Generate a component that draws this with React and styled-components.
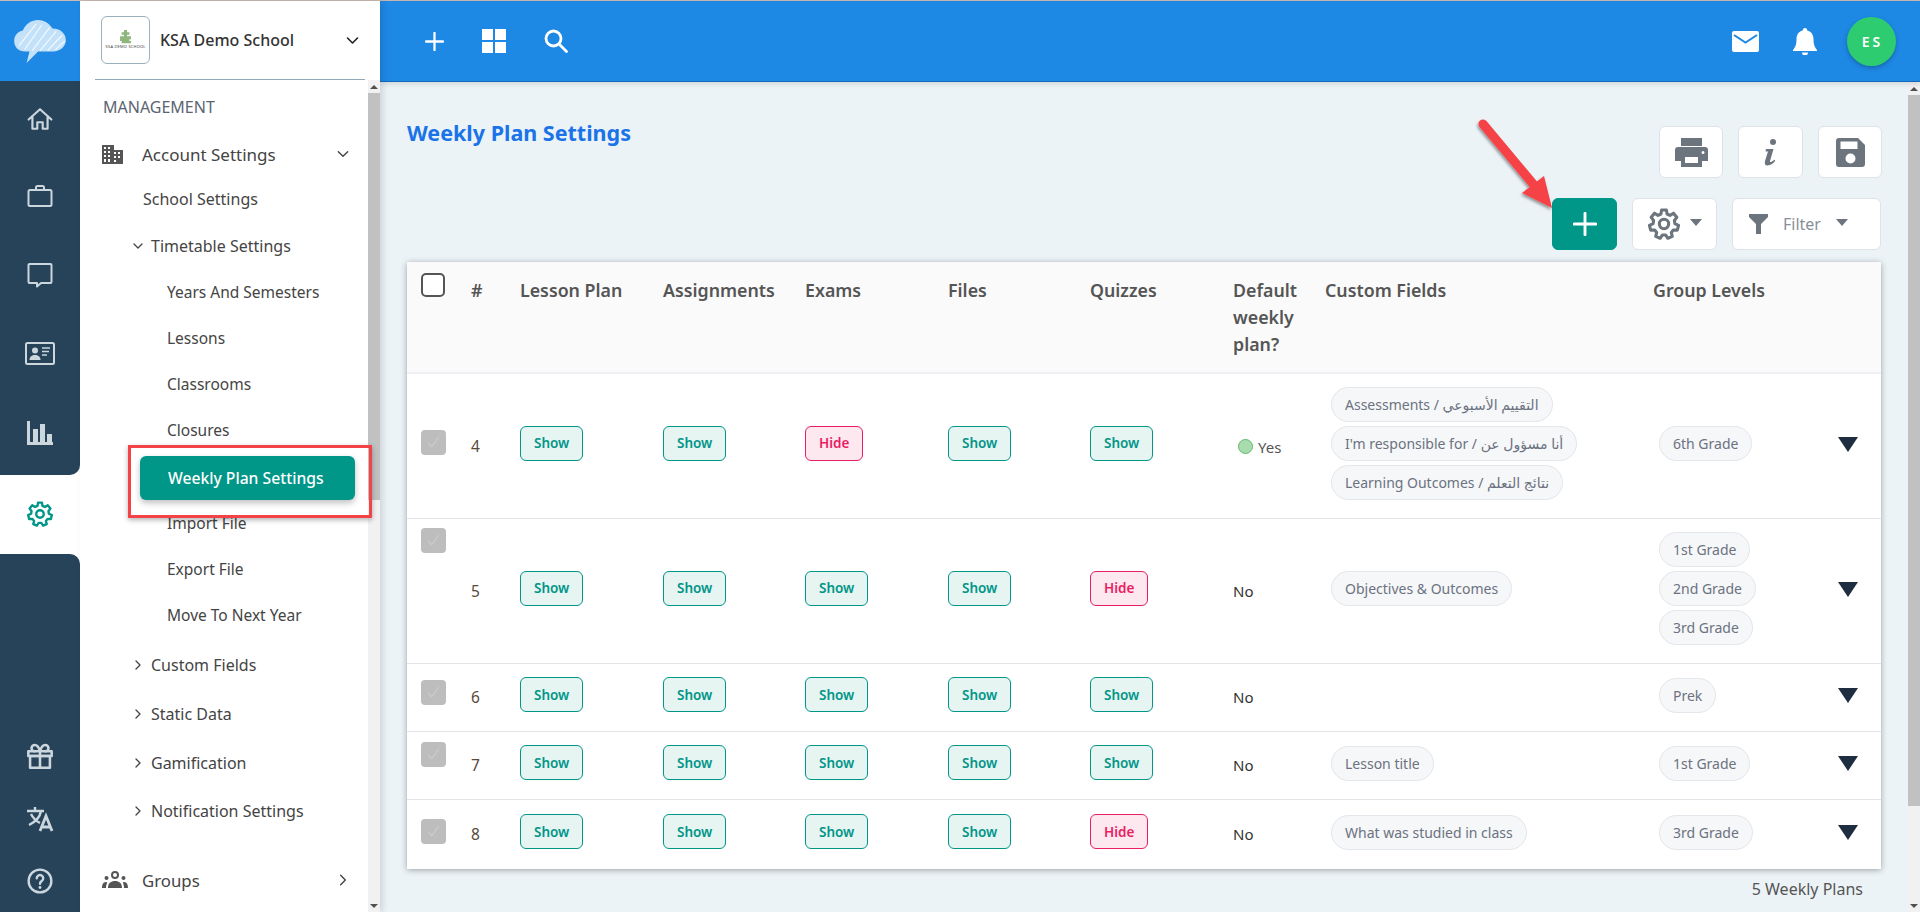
import React from "react";
import styled, { createGlobalStyle } from "styled-components";

const FONT = `"Noto Sans", "DejaVu Sans", sans-serif`;

const Global = createGlobalStyle`
  html, body { margin: 0; padding: 0; height: 100%; overflow: hidden; background: #ecf3f7; }
  body { font-family: ${FONT}; }
  * { box-sizing: border-box; }
`;

const Page = styled.div`
  display: flex; flex-direction: column; width: 1920px; height: 912px; overflow: hidden; position: relative;
`;
const TopLine = styled.div`height: 1px; background: #c9b9b2; flex: none;`;
const Shell = styled.div`display: flex; flex: 1; min-height: 0;`;

/* rail */
const Rail = styled.nav`width: 80px; flex: none; display: flex; flex-direction: column; background: #fff;`;
const LogoCell = styled.div`height: 80px; background: #1e88e5; display: flex; align-items: center; justify-content: center; flex: none;`;
const RailTop = styled.div`
  background: #27435a; height: 394px; border-bottom-right-radius: 10px; display: flex; flex-direction: column; align-items: center; flex: none;
`;
const RailActive = styled.div`height: 79px; display: flex; align-items: center; justify-content: center; flex: none; background: #fff; color: #009688; padding-bottom: 2px;`;
const RailBottom = styled.div`
  background: #27435a; flex: 1; border-top-right-radius: 10px; display: flex; flex-direction: column; align-items: center; justify-content: flex-end;
`;
const RailIcon = styled.div`
  height: ${p => p.$h || 79}px; width: 100%; display: flex; align-items: center; justify-content: center; color: #ccd6dd; flex: none;
`;

/* sidebar */
const Sidebar = styled.aside`
  width: 300px; flex: none; background: #fff; display: flex; flex-direction: column; box-shadow: 3px 0 6px rgba(0,0,0,.12); z-index: 2; position: relative;
`;
const SchoolBar = styled.div`
  height: 79px; margin: 0 15px; border-bottom: 1px solid #8fa9b8; display: flex; align-items: center; padding-left: 6px; flex: none; color: #333;
`;
const SchoolLogo = styled.div`
  width: 49px; height: 48px; border: 1px solid #9ab0bd; border-radius: 6px; display: flex; flex-direction: column; align-items: center; justify-content: center; margin-right: 10px; flex: none;
`;
const LogoText = styled.span`font-size: 4px; color: #444; line-height: 6px; white-space: nowrap; letter-spacing: .2px;`;
const SchoolName = styled.span`font-size: 16px; color: #333; flex: 1; font-weight: 500;`;
const SchoolCaret = styled.span`display: flex; margin-right: 5px; color: #222;`;
const SideBody = styled.div`display: flex; flex: 1; min-height: 0;`;
const SideList = styled.div`flex: 1; display: flex; flex-direction: column; padding-top: 4px; min-width: 0;`;
const Item = styled.div`
  height: 46px; flex: none; display: flex; align-items: center; font-size: ${p => p.$size || 15.5}px; color: ${p => p.$color || "#444"};
  padding-left: ${p => p.$pad}px; margin-top: ${p => p.$mt || 0}px; position: relative; white-space: nowrap;
`;
const ItemIcon = styled.span`width: 40px; flex: none; display: flex; color: #444; margin-left: -1px;`;
const Caret = styled.span`width: 19px; flex: none; display: flex; color: #444; margin-left: -1px;`;
const ItemEnd = styled.span`position: absolute; right: 18px; top: 50%; transform: translateY(-50%); display: flex; color: #444;`;
const ActiveItem = styled.div`
  height: 44px; flex: none; margin: 3px 0 0 60px; width: 215px; border-radius: 6px; background: #009688; color: #fff; font-size: 15.7px;
  font-weight: 500; display: flex; align-items: center; padding-left: 28px; box-shadow: 0 3px 6px rgba(0,0,0,.25); white-space: nowrap;
`;
const Highlight = styled.div`
  position: absolute; left: 48px; top: 444px; width: 244px; height: 73px; border: 3px solid #f44346; box-shadow: 0 2px 5px rgba(0,0,0,.3); pointer-events: none;
`;

/* scrollbars */
const Bar = styled.div`
  width: ${p => p.$w}px; flex: none; background: #f1f1f1; display: flex; flex-direction: column; align-items: center;
`;
const BarArrow = styled.div`
  height: 13px; flex: none; display: flex; align-items: center; justify-content: center;
  &::before { content: ""; border-left: 4px solid transparent; border-right: 4px solid transparent;
    ${p => (p.$down ? "border-top: 4px solid #505050;" : "border-bottom: 4px solid #505050;")} }
`;
const Thumb = styled.div`width: 100%; height: ${p => p.$h}px; background: #c1c1c1; flex: none;`;
const Spacer = styled.div`flex: 1;`;

/* main */
const Main = styled.main`flex: 1; min-width: 0; display: flex; flex-direction: column;`;
const Header = styled.header`
  height: 81px; flex: none; background: #1e88e5; border-bottom: 1px solid #1668b8; display: flex; align-items: center; padding: 0 24px 0 45px; color: #fff;
  box-shadow: 0 2px 5px rgba(0,0,0,.12); z-index: 1;
`;
const HeaderLeft = styled.div`display: flex; align-items: center; gap: 38px; flex: 1;`;
const HeaderRight = styled.div`display: flex; align-items: center;`;
const HeaderGap = styled.span`width: 34px;`;
const Avatar = styled.div`
  width: 49px; height: 49px; border-radius: 50%; background: #2ecc71; color: #fff; font-size: 14px; font-weight: 600; letter-spacing: 3px;
  display: flex; align-items: center; justify-content: center; margin-left: 30px; box-shadow: 0 2px 4px rgba(0,0,0,.25); padding-left: 2px;
`;
const Body = styled.div`flex: 1; display: flex; min-height: 0;`;
const Content = styled.div`flex: 1; min-width: 0; padding: 0 27px; display: flex; flex-direction: column;`;
const TitleRow = styled.div`display: flex; justify-content: space-between; align-items: flex-start; height: 116px; padding-top: 44px; flex: none;`;
const Title = styled.h1`margin: -7px 0 0; font-size: 21.5px; line-height: 28px; font-weight: 700; color: #1a73e8; white-space: nowrap;`;
const Tools = styled.div`display: flex; gap: 15px; margin-right: -1px;`;
const ToolRow = styled.div`display: flex; justify-content: flex-end; gap: 15px; height: 64px; flex: none;`;
const ToolBtn = styled.button`
  width: ${p => p.$w}px; height: 52px; background: #fff; border: 1px solid #dfe3e7; border-radius: 6px; color: #6c757d; display: flex; align-items: center;
  justify-content: ${p => (p.$start ? "flex-start" : "center")}; padding: 0 0 0 ${p => (p.$start ? 16 : 0)}px; font-family: inherit; font-size: 16px; gap: ${p => p.$gap || 0}px; flex: none;
`;
const AddBtn = styled(ToolBtn)`background: #009688; border-color: #009688; color: #fff;`;
const FilterLabel = styled.span`color: #8a9097;`;
const MiniCaret = styled.span`border-left: 6.500px solid transparent; border-right: 6.500px solid transparent; border-top: 7px solid #6c757d; margin-top: -4px;`;

const Card = styled.section`background: #fff; box-shadow: 0 1px 6px rgba(0,0,0,.35); flex: none;`;
const Table = styled.table`width: 100%; border-collapse: collapse; table-layout: fixed;`;
const Th = styled.th`
  background: #fafafa; text-align: left; vertical-align: top; padding: 15px 0 0 14px; height: 111px; font-size: 17.8px; font-weight: 600; color: #555; line-height: 27px;
  border-bottom: 2px solid #eef0f3;
`;
const Tr = styled.tr`height: ${p => p.$h}px; &:not(:last-child) td { border-bottom: 1px solid #e2e4e6; }`;
const Td = styled.td`padding: 0 0 0 ${p => p.$pad || 14}px; vertical-align: middle; font-size: 15px; color: #333;`;
const NumCell = styled.span`color: #5a4a3a; font-size: 15.500px;`;
const HeadBox = styled.div`width: 24px; height: 24px; border: 2px solid #555; border-radius: 5px; background: #fff; margin-top: -4px;`;
const RowBox = styled.div`
  width: 25px; height: 25px; border-radius: 4px; background: #bdbdbd; display: flex; align-items: center; justify-content: center; color: #c8ccd0;
  margin-top: -${p => p.$up}px;
`;
const Pill = styled.span`
  display: inline-flex; height: 35px; padding: 0 13px; align-items: center; border-radius: 6px; font-size: 13.500px; font-weight: 600; margin-top: -5px;
  color: ${p => (p.$hide ? "#e91e63" : "#009688")}; background: ${p => (p.$hide ? "#fde8ef" : "#e6f4f2")}; border: 1px solid ${p => (p.$hide ? "#e91e63" : "#009688")};
`;
const Chips = styled.div`display: flex; flex-direction: column; align-items: flex-start; gap: 4px; padding-bottom: 4px;`;
const Chip = styled.span`
  display: inline-flex; height: 35px; padding: 0 13px; align-items: center; border-radius: 18px; font-size: 14px; color: #6b7280; background: #f6f7f9; border: 1px solid #e3e6ea; white-space: nowrap;
`;
const YesWrap = styled.span`display: inline-flex; align-items: center; gap: 5px; margin-left: 5px; margin-top: 3px; color: #555;`;
const Dot = styled.span`width: 15px; height: 15px; border-radius: 50%; background: #a8dcae; border: 1px solid #5fb96a;`;
const NoText = styled.span`color: #333;`;
const RowArrow = styled.span`
  display: block; width: 0; border-left: 10px solid transparent; border-right: 10px solid transparent; border-top: 15px solid #1e2d40; margin-left: 4px; margin-top: -3px;
`;
const Count = styled.div`text-align: right; padding: 9px 18px 0 0; font-size: 16px; color: #555;`;
const Pointer = styled.svg`position: absolute; left: 1470px; top: 110px; pointer-events: none; z-index: 3;`;

const Sv = ({ s = 24, sw = 2, children, vb = "0 0 24 24" }) => (
  <svg width={s} height={s} viewBox={vb} fill="none" stroke="currentColor" strokeWidth={sw} strokeLinecap="round" strokeLinejoin="round">{children}</svg>
);
const Chev = ({ dir = "down", s = 14, sw = 2 }) => (
  <Sv s={s} sw={sw}><path d={dir === "down" ? "M4 8l8 8 8-8" : "M8 4l8 8-8 8"} /></Sv>
);

const Cloud = () => (
  <svg width="56" height="44" viewBox="0 0 56 46">
    <path d="M13 34C5 34 1 29 1 23c0-6 4-10 9-11C13 5 19 1 26 1c7 0 12 4 15 9 8 0 14 5 14 12 0 7-6 12-13 12H26L14 46l3-12z" fill="#c3e1f9" />
    <path d="M6 28L24 5M12 32L30 6M20 33L38 9M28 33L45 13M36 33L51 17M44 32L54 23" stroke="#fff" strokeWidth="1.200" opacity=".8" fill="none" />
  </svg>
);
const SchoolMark = () => (
  <svg width="11" height="14" viewBox="0 0 14 18"><path d="M5 0h4v3h3v3H9v2h5v4h-2v2h2v3H2v-3H0V8h5V6H2V3h3z" fill="#8fb77d" /></svg>
);
const HomeI = () => <Sv s={26} sw={2}><path d="M1.500 12.500L12 3l10.500 9.500M5 10v11h4.500v-6h5v6H19V10" /></Sv>;
const BriefI = () => <svg width="26" height="26" viewBox="0 0 26 26" fill="none" stroke="currentColor" strokeWidth="2" strokeLinejoin="round"><rect x="1.500" y="7" width="23" height="16" rx="1.500" /><path d="M9 7V4.500A1.500 1.500 0 0 1 10.500 3h5A1.500 1.500 0 0 1 17 4.500V7" /></svg>;
const ChatI = () => <svg width="26" height="26" viewBox="0 0 26 26" fill="none" stroke="currentColor" strokeWidth="2" strokeLinejoin="round"><path d="M2.500 2h21a1 1 0 0 1 1 1v17a1 1 0 0 1-1 1H14l-4 3.500V21H2.500a1 1 0 0 1-1-1V3a1 1 0 0 1 1-1z" /></svg>;
const CardI = () => (
  <svg width="30" height="24" viewBox="0 0 30 24"><rect x="1" y="1" width="28" height="21" rx="1.500" fill="none" stroke="currentColor" strokeWidth="2" />
    <circle cx="10" cy="8.500" r="3" fill="currentColor" /><path d="M4.500 18c0-3.500 2.500-5 5.500-5s5.500 1.500 5.500 5z" fill="currentColor" /><path d="M17 6h8M17 9.500h7M17 13h5" stroke="currentColor" strokeWidth="1.600" /></svg>
);
const BarsI = () => (
  <svg width="26" height="24" viewBox="0 0 26 24" fill="currentColor"><path d="M0 0h3v24H0zM6 8h5v13H6zM13 3h5v18h-5zM20 13h5v8h-5zM3 21h23v3H3z" /></svg>
);
const GearPath = "M12 8.500a3.500 3.500 0 1 0 0 7 3.500 3.500 0 0 0 0-7zM10.200 1.500h3.600l.5 3 2.200 1 2.600-1.600 2.500 3.100-1.800 2.400.4 2.400 2.700 1.300-.9 3.500-3-.1-1.500 1.900.7 2.900-3.300 1.400-1.700-2.500h-2.400l-1.700 2.500-3.300-1.400.7-2.900-1.500-1.900-3 .1-.9-3.500 2.700-1.300.4-2.400L2.400 7l2.500-3.100 2.600 1.600 2.200-1z";
const Gear = ({ s = 26, sw = 2 }) => <Sv s={s} sw={sw}><path d={GearPath} /></Sv>;
const GiftI = () => <Sv s={28} sw={2.200}><rect x="2" y="8" width="20" height="4" /><rect x="3.500" y="12" width="17" height="10" /><path d="M12 8v14M12 8S10.500 2.500 7.500 2.500A2.500 2.500 0 0 0 7.500 8M12 8s1.500-5.500 4.500-5.500a2.500 2.500 0 0 1 0 5.500" /></Sv>;
const TransI = () => (
  <svg width="28" height="26" viewBox="0 0 28 26" fill="none" stroke="currentColor" strokeWidth="2.400"><path d="M1 5h17M9 1v4M15 5c-1 6-6 11-12 14M5 8c2 4 5 7 9 9" /><path d="M14 25l6-15 6 15M16 21h8" strokeWidth="2.800" /></svg>
);
const HelpI = () => <Sv s={26} sw={2.200}><circle cx="12" cy="12" r="10.500" /><path d="M9 9.500a3 3 0 1 1 4.500 2.600c-1 .6-1.500 1.200-1.500 2.400" /><path d="M12 17.800v.2" strokeWidth="2.600" /></Sv>;
const BuildingI = () => (
  <svg width="21" height="19" viewBox="0 0 21 19" fill="#555"><path fillRule="evenodd" d="M0 0h12v5h9v14H0zM2 2v2h2V2zm4 0v2h2V2zM2 6v2h2V6zm4 0v2h2V6zM2 10v2h2v-2zm4 0v2h2v-2zM2 14v3h2v-3zm4 0v3h2v-3zM12 7v2h2V7h-2zm0 4v2h2v-2h-2zm0 4v2h2v-2h-2zm4-8v2h2V7zm0 4v2h2v-2z" /></svg>
);
const GroupI = () => (
  <svg width="26" height="18" viewBox="0 0 26 18" fill="#555"><circle cx="13" cy="4" r="3" fill="none" stroke="#555" strokeWidth="2" /><circle cx="4.500" cy="7" r="2" /><circle cx="21.500" cy="7" r="2" /><path d="M6 17c0-5 3-7 7-7s7 2 7 7zM0 17c0-3 1-6 4-6 1 0 1 .5 1 1-.6 1.500-1 3-1 5zM26 17c0-3-1-6-4-6-1 0-1 .5-1 1 .6 1.500 1 3 1 5z" /></svg>
);
const PrintI = () => (
  <svg width="33" height="29" viewBox="0 0 33 29" fill="#6c757d"><path fillRule="evenodd" d="M6 0h21v8H6zM3 9h27a3 3 0 0 1 3 3v11h-6v6H6v-6H0V12a3 3 0 0 1 3-3zm7 10v6h13v-6zm18-6a1.500 1.500 0 1 0 0 3 1.500 1.500 0 0 0 0-3z" /></svg>
);
const InfoI = () => (
  <svg width="14" height="27" viewBox="0 0 14 27" fill="#6c757d"><circle cx="9" cy="3" r="3" /><path d="M2 10h7.500L6 22c-.3 1 .8 1.200 1.500.7l3-2 .8 1C9.500 24 7 26.500 3.500 26.500 1 26.500.3 24.500 1 22l3-9.500H1.500z" /></svg>
);
const SaveI = () => (
  <svg width="29" height="29" viewBox="0 0 29 29" fill="#6c757d"><path fillRule="evenodd" d="M3 0h19l7 7v19a3 3 0 0 1-3 3H3a3 3 0 0 1-3-3V3a3 3 0 0 1 3-3zm1.500 3.500v7.500h17V3.500zM14.500 15.500a5 5 0 1 0 0 10 5 5 0 0 0 0-10z" /></svg>
);
const FunnelI = () => <svg width="19" height="20" viewBox="0 0 19 20" fill="#6c757d"><path d="M0 0h19v3l-7 7v10H7V10L0 3z" /></svg>;
const GridI = () => <svg width="24" height="24" viewBox="0 0 24 24" fill="#fff"><path d="M0 0h11v11H0zM13 0h11v11H13zM0 13h11v11H0zM13 13h11v11H13z" /></svg>;
const SearchI = () => <Sv s={24} sw={2.800}><circle cx="9.500" cy="9.500" r="7.500" /><path d="M15 15l7.500 7.500" /></Sv>;
const PlusI = ({ s = 20, sw = 2.400 }) => <Sv s={s} sw={sw} vb="0 0 20 20"><path d="M10 1v18M1 10h18" /></Sv>;
const MailI = () => (
  <svg width="27" height="21" viewBox="0 0 27 21"><rect width="27" height="21" rx="2" fill="#fff" /><path d="M2 4l11.500 7.500L25 4" fill="none" stroke="#1e88e5" strokeWidth="2" /></svg>
);
const BellI = () => (
  <svg width="24" height="27" viewBox="0 0 24 27" fill="#fff"><path d="M12 0a2 2 0 0 1 2 2.300c4 1 6.500 4.300 6.500 8.700 0 5 .7 7.500 3.500 11v1H0v-1c2.800-3.500 3.500-6 3.500-11 0-4.400 2.500-7.700 6.500-8.700A2 2 0 0 1 12 0zM9 24.500h6a3 3 0 0 1-6 0z" /></svg>
);
const CheckI = () => <Sv s={15} sw={2}><path d="M4 13l5 6L20 4" /></Sv>;

const cols = [50, 49, 143, 142, 143, 142, 143, 92, 328, 181, 61];
const heads = ["", "#", "Lesson Plan", "Assignments", "Exams", "Files", "Quizzes", "Default weekly plan?", "Custom Fields", "Group Levels", ""];
const rows = [
  { n: 4, h: 145, s: [1, 1, 0, 1, 1], yes: true, up: 6, f: ["Assessments / التقييم الأسبوعي", "I'm responsible for / أنا مسؤول عن", "Learning Outcomes / نتائج التعلم"], g: ["6th Grade"] },
  { n: 5, h: 145, s: [1, 1, 1, 1, 0], up: 63, f: ["Objectives & Outcomes"], g: ["1st Grade", "2nd Grade", "3rd Grade"] },
  { n: 6, h: 68, s: [1, 1, 1, 1, 1], up: 9, f: [], g: ["Prek"] },
  { n: 7, h: 68, s: [1, 1, 1, 1, 1], up: 22, f: ["Lesson title"], g: ["1st Grade"] },
  { n: 8, h: 70, s: [1, 1, 1, 1, 0], up: 6, f: ["What was studied in class"], g: ["3rd Grade"] },
];

export default function App() {
  return (
    <Page>
      <Global />
      <TopLine />
      <Shell>
        <Rail>
          <LogoCell><Cloud /></LogoCell>
          <RailTop>
            <RailIcon $h={75}><HomeI /></RailIcon>
            <RailIcon><BriefI /></RailIcon>
            <RailIcon><ChatI /></RailIcon>
            <RailIcon><CardI /></RailIcon>
            <RailIcon><BarsI /></RailIcon>
          </RailTop>
          <RailActive><Gear s={26} sw={2.200} /></RailActive>
          <RailBottom>
            <RailIcon $h={64}><GiftI /></RailIcon>
            <RailIcon $h={62}><TransI /></RailIcon>
            <RailIcon $h={62}><HelpI /></RailIcon>
          </RailBottom>
        </Rail>
        <Sidebar>
          <SchoolBar>
            <SchoolLogo><SchoolMark /><LogoText>KSA DEMO SCHOOL</LogoText></SchoolLogo>
            <SchoolName>KSA Demo School</SchoolName>
            <SchoolCaret><Chev s={15} sw={2.600} /></SchoolCaret>
          </SchoolBar>
          <SideBody>
            <SideList>
              <Item $pad={23} $size={16} $color="#5a6472">MANAGEMENT</Item>
              <Item $pad={23} $size={17} $mt={1}><ItemIcon><BuildingI /></ItemIcon>Account Settings<ItemEnd><Chev s={14} sw={2.400} /></ItemEnd></Item>
              <Item $pad={63} $size={16} $mt={-1}>School Settings</Item>
              <Item $pad={53} $size={16} $mt={1}><Caret><Chev s={12} sw={2.600} /></Caret>Timetable Settings</Item>
              <Item $pad={87}>Years And Semesters</Item>
              <Item $pad={87}>Lessons</Item>
              <Item $pad={87}>Classrooms</Item>
              <Item $pad={87}>Closures</Item>
              <ActiveItem>Weekly Plan Settings</ActiveItem>
              <Item $pad={87}>Import File</Item>
              <Item $pad={87}>Export File</Item>
              <Item $pad={87}>Move To Next Year</Item>
              <Item $pad={53} $size={16} $mt={4}><Caret><Chev dir="right" s={12} sw={2.600} /></Caret>Custom Fields</Item>
              <Item $pad={53} $size={16} $mt={3}><Caret><Chev dir="right" s={12} sw={2.600} /></Caret>Static Data</Item>
              <Item $pad={53} $size={16} $mt={3}><Caret><Chev dir="right" s={12} sw={2.600} /></Caret>Gamification</Item>
              <Item $pad={53} $size={16} $mt={2}><Caret><Chev dir="right" s={12} sw={2.600} /></Caret>Notification Settings</Item>
              <Item $pad={23} $size={16.800} $mt={23}><ItemIcon><GroupI /></ItemIcon>Groups<ItemEnd><Chev dir="right" s={14} sw={2.400} /></ItemEnd></Item>
            </SideList>
            <Bar $w={12}>
              <BarArrow />
              <Thumb $h={407} />
              <Spacer />
              <BarArrow $down />
            </Bar>
          </SideBody>
          <Highlight />
        </Sidebar>
        <Main>
          <Header>
            <HeaderLeft>
              <PlusI s={19} sw={2.400} />
              <GridI />
              <SearchI />
            </HeaderLeft>
            <HeaderRight>
              <MailI />
              <HeaderGap />
              <BellI />
              <Avatar>ES</Avatar>
            </HeaderRight>
          </Header>
          <Body>
            <Content>
              <TitleRow>
                <Title>Weekly Plan Settings</Title>
                <Tools>
                  <ToolBtn $w={64}><PrintI /></ToolBtn>
                  <ToolBtn $w={65}><InfoI /></ToolBtn>
                  <ToolBtn $w={64}><SaveI /></ToolBtn>
                </Tools>
              </TitleRow>
              <ToolRow>
                <AddBtn $w={65}><PlusI s={24} sw={2.400} /></AddBtn>
                <ToolBtn $w={85} $gap={10}><Gear s={32} sw={2.300} /><MiniCaret /></ToolBtn>
                <ToolBtn $w={149} $gap={15} $start><FunnelI /><FilterLabel>Filter</FilterLabel><MiniCaret /></ToolBtn>
              </ToolRow>
              <Card>
                <Table>
                  <colgroup>{cols.map((w, i) => <col key={i} style={{ width: w }} />)}</colgroup>
                  <thead>
                    <tr>
                      {heads.map((h, i) => <Th key={i}>{i === 0 ? <HeadBox /> : h}</Th>)}
                    </tr>
                  </thead>
                  <tbody>
                    {rows.map(r => (
                      <Tr key={r.n} $h={r.h}>
                        <Td><RowBox $up={r.up}><CheckI /></RowBox></Td>
                        <Td><NumCell>{r.n}</NumCell></Td>
                        {r.s.map((v, i) => <Td key={i}><Pill $hide={!v}>{v ? "Show" : "Hide"}</Pill></Td>)}
                        <Td>{r.yes ? <YesWrap><Dot />Yes</YesWrap> : <NoText>No</NoText>}</Td>
                        <Td $pad={20}><Chips>{r.f.map(c => <Chip key={c}>{c}</Chip>)}</Chips></Td>
                        <Td $pad={20}><Chips>{r.g.map(c => <Chip key={c}>{c}</Chip>)}</Chips></Td>
                        <Td><RowArrow /></Td>
                      </Tr>
                    ))}
                  </tbody>
                </Table>
              </Card>
              <Count>5 Weekly Plans</Count>
            </Content>
            <Bar $w={12}>
              <BarArrow />
              <Thumb $h={711} />
              <Spacer />
              <BarArrow $down />
            </Bar>
          </Body>
        </Main>
      </Shell>
      <Pointer width="90" height="110" viewBox="0 0 90 110">
        <defs>
          <filter id="sh" x="-20%" y="-20%" width="140%" height="140%"><feDropShadow dx="-1" dy="2" stdDeviation="1.500" floodOpacity=".4" /></filter>
        </defs>
        <g filter="url(#sh)">
          <path d="M13 14L64 75" stroke="#f44346" strokeWidth="9" strokeLinecap="round" fill="none" />
          <path d="M82 98L52 83 74 66z" fill="#f44346" />
        </g>
      </Pointer>
    </Page>
  );
}
